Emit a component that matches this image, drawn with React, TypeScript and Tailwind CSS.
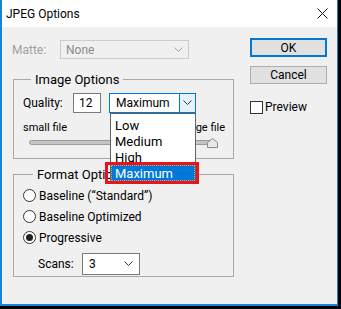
import React from "react";

const Chevron: React.FC<{ color?: string }> = ({ color = "#333" }) => (
  <svg width="9" height="6" viewBox="0 0 9 6" fill="none">
    <path d="M0.5 0.5 L4.5 4.5 L8.5 0.5" stroke={color} strokeWidth="1" />
  </svg>
);

const Radio: React.FC<{ checked?: boolean; label: string }> = ({ checked, label }) => (
  <div className="flex items-center h-[13px]">
    <div className="w-[13px] h-[13px] rounded-full border border-[#333] bg-white flex items-center justify-center">
      {checked && <div className="w-[7px] h-[7px] rounded-full bg-[#222]" />}
    </div>
    <span className="ml-[3px]">{label}</span>
  </div>
);

const App: React.FC = () => {
  const items = ["Low", "Medium", "High", "Maximum"];

  return (
    <div className="w-[341px] h-[309px] bg-black font-['Roboto',sans-serif] text-[12px] text-black leading-none">
      <div className="w-[338px] h-[306px] bg-[#f0f0f0] border-l-2 border-r border-b-2 border-[#1883d7] flex flex-col">
        {/* title bar */}
        <div className="h-[27px] bg-white flex items-center justify-between pl-[4px] pr-[9px] shrink-0">
          <span className="text-[12px]">JPEG Options</span>
          <svg width="11" height="11" viewBox="0 0 11 11">
            <path d="M0.5 0.5 L10.5 10.5 M10.5 0.5 L0.5 10.5" stroke="#111" strokeWidth="1" />
          </svg>
        </div>

        <div className="flex flex-1">
          {/* left column */}
          <div className="w-[236px] flex flex-col">
            {/* matte */}
            <div className="flex items-center mt-[13px] pl-[10px] h-[19px]">
              <span className="w-[48px] text-[#a0a0a0]">Matte:</span>
              <div className="w-[129px] h-[19px] border border-[#cccccc] bg-[#f0f0f0] flex items-center justify-between pl-[5px] pr-[5px]">
                <span className="text-[#8a8a8a]">None</span>
                <Chevron color="#a0a0a0" />
              </div>
            </div>

            {/* image options */}
            <fieldset className="ml-[11px] w-[221px] h-[86px] mt-[14px] border border-[#a8a8a8] relative z-10">
              <legend className="ml-[17px] px-[4px] text-[13px]">Image Options</legend>
              <div className="flex items-center pl-[9px] mt-[7px] h-[20px]">
                <span className="w-[50px]">Quality:</span>
                <div className="w-[28px] h-[20px] border border-[#7a7a7a] bg-white flex items-center pl-[5px]">
                  12
                </div>
                <div className="relative z-20 ml-[8px] w-[87px] h-[20px]">
                  <div className="w-full h-full border border-[#0078d7] bg-white flex items-center">
                    <span className="flex-1 pl-[6px]">Maximum</span>
                    <div className="w-[16px] h-full bg-[#e5f1fb] border-l border-[#0078d7] flex items-center justify-center">
                      <Chevron color="#333" />
                    </div>
                  </div>
                  {/* dropdown list */}
                  <div className="absolute left-[1px] top-[20px] w-[86px] bg-white border border-[#646464] pt-[3px] pb-[1px]">
                    {items.map((it) => (
                      <div
                        key={it}
                        className={
                          it === "Maximum"
                            ? "relative h-[16px] flex items-center pl-[3px] text-[13px] bg-[#0078d7] text-white border border-dotted border-[#e0a060]"
                            : "h-[16px] flex items-center pl-[4px] text-[13px]"
                        }
                      >
                        {it}
                        {it === "Maximum" && (
                          <div className="absolute -left-[7px] -right-[5px] -top-[4px] -bottom-[4px] border-[3px] border-[#e8141b]" />
                        )}
                      </div>
                    ))}
                  </div>
                </div>
              </div>
              <div className="flex justify-between pl-[9px] pr-[8px] mt-[9px] text-[11px]">
                <span>small file</span>
                <span>large file</span>
              </div>
              <div className="relative mx-[15px] mt-[5px] h-[9px]">
                <div className="absolute left-0 right-[2px] top-[2px] h-[5px] rounded-full bg-[#c4c4c4] border border-[#9a9a9a]" />
                <svg className="absolute right-0 top-0" width="11" height="10" viewBox="0 0 11 10">
                  <path d="M0.5 9.5 L0.5 4.5 L5.5 0.5 L10.5 4.5 L10.5 9.5 Z" fill="#e8e8e8" stroke="#8a8a8a" />
                </svg>
              </div>
            </fieldset>

            {/* format options */}
            <fieldset className="ml-[11px] w-[221px] h-[109px] mt-[9px] border border-[#a8a8a8]">
              <legend className="ml-[19px] px-[4px] text-[13px]">Format Options</legend>
              <div className="flex flex-col gap-[8px] pl-[9px] mt-[8px]">
                <Radio label={"Baseline (\u201CStandard\u201D)"} />
                <Radio label="Baseline Optimized" />
                <Radio checked label="Progressive" />
              </div>
              <div className="flex items-center pl-[24px] mt-[9px] h-[22px]">
                <span className="w-[44px]">Scans:</span>
                <div className="w-[58px] h-[22px] border border-[#7a7a7a] bg-white flex items-center justify-between pl-[6px] pr-[6px]">
                  <span>3</span>
                  <Chevron color="#333" />
                </div>
              </div>
            </fieldset>
          </div>

          {/* right column */}
          <div className="flex flex-col ml-[12px] mt-[11px]">
            <button className="w-[77px] h-[19px] bg-[#e1e1e1] border-2 border-[#0078d7] flex items-center justify-center">
              OK
            </button>
            <button className="w-[77px] h-[18px] mt-[9px] bg-[#e1e1e1] border border-[#adadad] flex items-center justify-center">
              Cancel
            </button>
            <div className="flex items-center mt-[16px] h-[14px]">
              <div className="w-[13px] h-[13px] border border-[#333] bg-white" />
              <span className="ml-[2px]">Preview</span>
            </div>
          </div>
        </div>
      </div>
    </div>
  );
};

export default App;
